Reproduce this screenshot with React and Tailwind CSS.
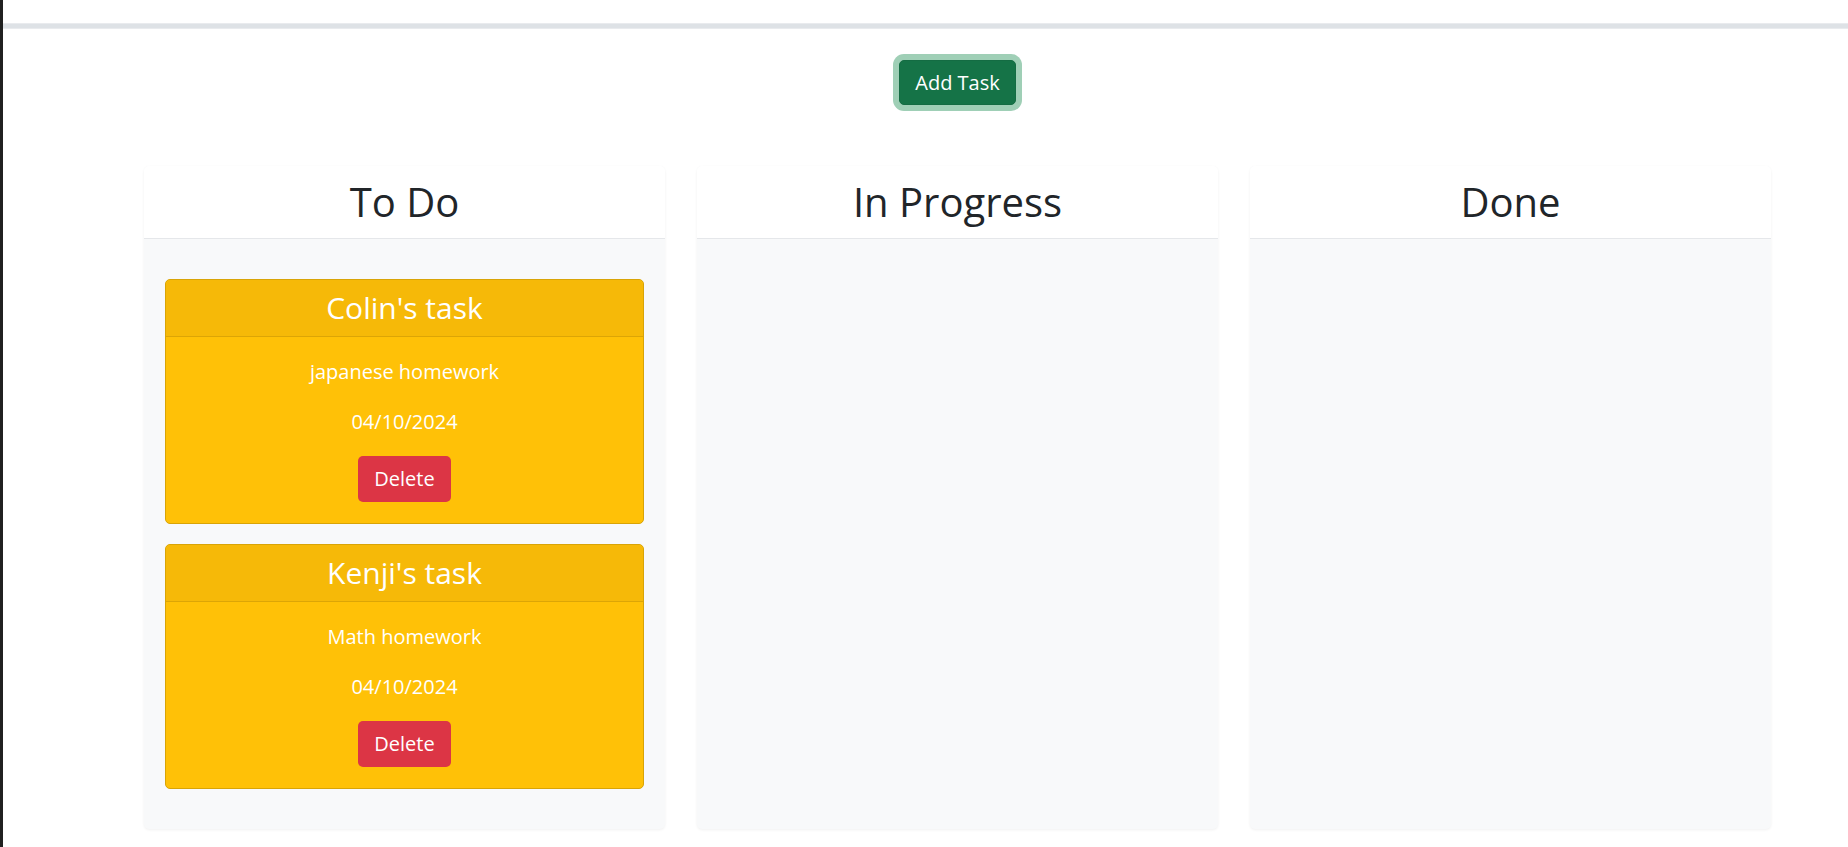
import React from "react";

const columns = [
  {
    title: "To Do",
    tasks: [
      { owner: "Colin's task", desc: "japanese homework", date: "04/10/2024" },
      { owner: "Kenji's task", desc: "Math homework", date: "04/10/2024" },
    ],
  },
  { title: "In Progress", tasks: [] },
  { title: "Done", tasks: [] },
];

const TaskCard = ({ task }) => (
  <div className="rounded-[5px] border border-[#d9a406] bg-[#ffc107] text-white text-center">
    {/* Header */}
    <div className="h-[57px] flex items-center justify-center bg-[#f6b908] border-b border-[#dca506] rounded-t-[5px]">
      <h4 className="text-[30px] leading-none">{task.owner}</h4>
    </div>
    {/* Body */}
    <div className="pt-[20px] pb-[21px] flex flex-col items-center">
      <p className="h-[30px] flex items-center text-[20px]">{task.desc}</p>
      <p className="mt-[20px] h-[30px] flex items-center text-[20px]">{task.date}</p>
      <button className="mt-[19px] w-[93px] h-[46px] rounded-[5px] bg-[#dc3545] text-white text-[20px] flex items-center justify-center">
        Delete
      </button>
    </div>
  </div>
);

const Column = ({ title, tasks }) => (
  <div className="flex flex-col rounded-[5px] bg-[#f8f9fa] shadow-[0_1px_3px_rgba(0,0,0,0.06)]">
    <div className="h-[73px] flex items-center justify-center bg-white border-b border-[#e5e7ea] rounded-t-[5px]">
      <h2 className="text-[40px] text-[#212529] leading-none">{title}</h2>
    </div>
    <div className="flex-1 px-[21px] py-[40px] flex flex-col gap-[20px]">
      {tasks.map((t) => (
        <TaskCard key={t.owner} task={t} />
      ))}
    </div>
  </div>
);

export default function App() {
  return (
    <div
      className="min-h-[847px] bg-white flex"
      style={{ fontFamily: '"Open Sans", "Noto Sans", sans-serif' }}
    >
      {/* left window edge */}
      <div className="w-[3px] bg-[#202020] shrink-0" />

      <div className="flex-1 flex flex-col">
        {/* Top nav strip */}
        <div className="h-[23px] bg-white" />
        <div className="h-[6px] bg-[#dee2e6] border-y border-[#e9ebee]" />

        <div className="ml-[141px] w-[1627px] flex flex-col">
          {/* Add Task */}
          <div className="flex justify-center pt-[31px]">
            <button className="w-[117px] h-[45px] rounded-[5px] bg-[#157347] border border-[#146c43] text-white text-[20px] ring-[6px] ring-[#9fcfb6]">
              Add Task
            </button>
          </div>

          {/* Board */}
          <div className="mt-[61px] grid grid-cols-3 gap-[32px] h-[661px]">
            {columns.map((c) => (
              <Column key={c.title} title={c.title} tasks={c.tasks} />
            ))}
          </div>
        </div>
      </div>
    </div>
  );
}
